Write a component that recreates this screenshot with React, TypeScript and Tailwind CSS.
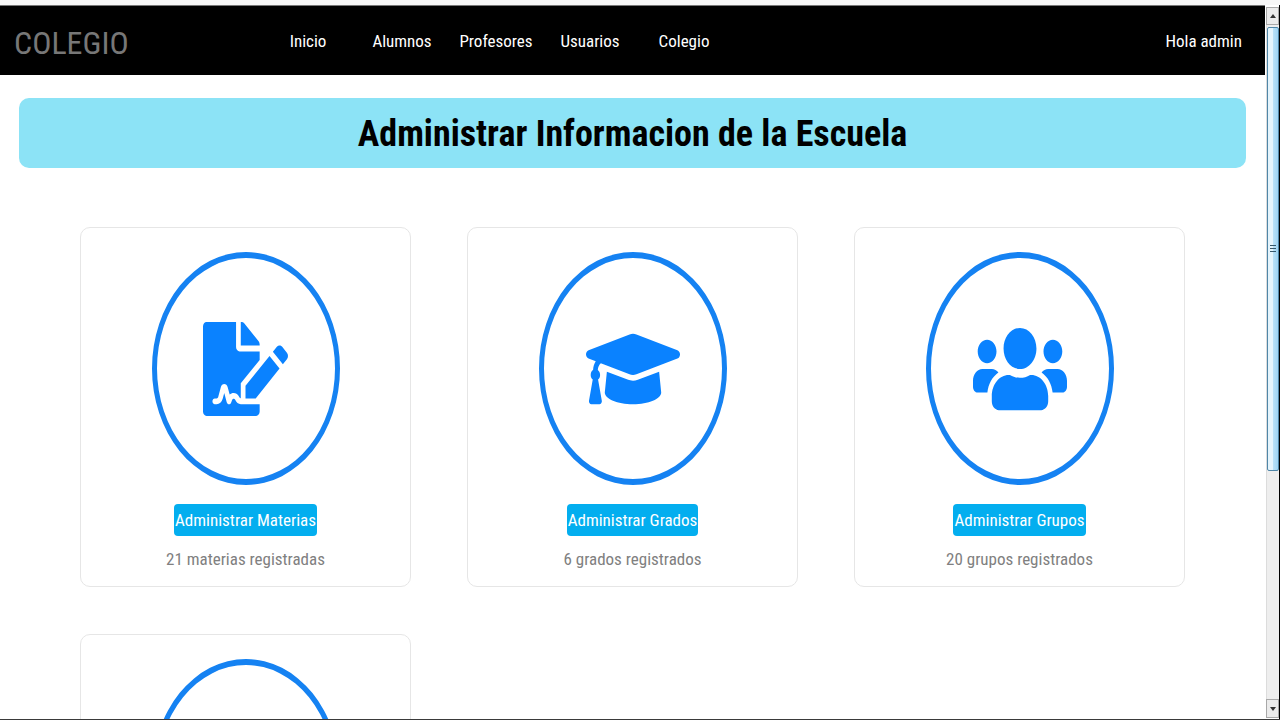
import type { ComponentType, SVGProps } from "react";
import { FaFileSignature, FaGraduationCap, FaUsers } from "react-icons/fa";

type IconType = ComponentType<SVGProps<SVGSVGElement>>;

interface Section {
  label: string;
  count: string;
  Icon: IconType;
  iconClass: string;
}

const navItems = ["Inicio", "Alumnos", "Profesores", "Usuarios", "Colegio"];

const sections: Section[] = [
  {
    label: "Administrar Materias",
    count: "21 materias registradas",
    Icon: FaFileSignature as IconType,
    iconClass: "h-[94px] w-[85px]",
  },
  {
    label: "Administrar Grados",
    count: "6 grados registrados",
    Icon: FaGraduationCap as IconType,
    iconClass: "h-[94px] w-[94px]",
  },
  {
    label: "Administrar Grupos",
    count: "20 grupos registrados",
    Icon: FaUsers as IconType,
    iconClass: "h-[94px] w-[94px]",
  },
];

function Navbar() {
  return (
    <header className="flex h-[69px] shrink-0 items-center bg-black pr-[23px] pl-[14px] text-white">
      <a href="#" className="w-[247px] pt-1 text-[32px] leading-10 text-[#777777]">
        COLEGIO
      </a>
      <nav className="grid grid-cols-[repeat(5,94px)] text-center text-[17px] leading-6">
        {navItems.map((item) => (
          <a key={item} href="#">
            {item}
          </a>
        ))}
      </nav>
      <a href="#" className="ml-auto text-[17px] leading-6">
        Hola admin
      </a>
    </header>
  );
}

function Ring({ Icon, iconClass }: { Icon?: IconType; iconClass?: string }) {
  return (
    <div className="flex h-[233px] w-[188px] items-center justify-center rounded-[50%] border-x-[5px] border-y-[6px] border-[#1582f2] text-[#0a82ff]">
      {Icon && <Icon className={iconClass} preserveAspectRatio="none" aria-hidden="true" />}
    </div>
  );
}

function SectionCard({ label, count, Icon, iconClass }: Section) {
  return (
    <article className="flex h-[360px] flex-col items-center rounded-[10px] border border-[#e6e6e6] pt-[24px]">
      <Ring Icon={Icon} iconClass={iconClass} />
      <button
        type="button"
        className="mt-[19px] h-[32px] rounded-[4px] bg-[#03aeef] px-px text-[17px] leading-6 text-white"
      >
        {label}
      </button>
      <p className="mt-[11px] text-[17px] leading-6 text-[#808080]">{count}</p>
    </article>
  );
}

function Scrollbar() {
  return (
    <div className="flex w-[15px] shrink-0 flex-col border-r border-black bg-white pt-[2px] pl-px">
      <button
        type="button"
        aria-label="Subir"
        className="flex h-[18px] items-center justify-center border border-[#a8a8a8] bg-[#ebebeb]"
      >
        <svg viewBox="0 0 6 4" className="h-1 w-[6px] fill-[#333333]" aria-hidden="true">
          <path d="M3 0 6 4H0z" />
        </svg>
      </button>
      <div className="flex min-h-0 flex-1 flex-col border-l border-[#dcdcdc] bg-[#eeeeee] pt-[2px]">
        <div className="flex h-[66%] flex-col items-center justify-center gap-[2px] rounded-[2px] border border-[#4f86a8] bg-linear-to-r from-[#e4f4fc] from-45% via-[#b9e1f8] via-50% to-[#9dd3f2]">
          <span className="h-px w-[6px] bg-[#35586c]" />
          <span className="h-px w-[6px] bg-[#35586c]" />
          <span className="h-px w-[6px] bg-[#35586c]" />
        </div>
      </div>
      <button
        type="button"
        aria-label="Bajar"
        className="mb-px flex h-[19px] items-center justify-center border border-[#a8a8a8] bg-[#ebebeb]"
      >
        <svg viewBox="0 0 6 4" className="h-1 w-[6px] fill-[#333333]" aria-hidden="true">
          <path d="M0 0H6L3 4z" />
        </svg>
      </button>
    </div>
  );
}

export default function App() {
  return (
    <div className="flex h-screen flex-col overflow-hidden border-b border-[#3a3a3a] bg-[#f7f7f7] pt-[5px] font-['Liberation_Sans_Narrow','Arial_Narrow','Roboto_Condensed','Liberation_Sans',sans-serif]">
      <div className="flex min-h-0 flex-1">
        <div className="flex min-w-0 flex-1 flex-col overflow-hidden border-t border-[#777777] bg-white">
          <Navbar />
          <main className="min-h-0 flex-1">
            <h1 className="mx-[19px] mt-[23px] flex h-[70px] items-center justify-center rounded-[10px] bg-[#8ce3f6] pt-[2px] text-[36px] font-bold text-black">
              Administrar Informacion de la Escuela
            </h1>
            <div className="mt-[59px] grid grid-cols-3 gap-x-[56px] gap-y-[47px] px-[80px]">
              {sections.map((section) => (
                <SectionCard key={section.label} {...section} />
              ))}
              <article className="flex h-[360px] flex-col items-center rounded-[10px] border border-[#e6e6e6] pt-[24px]">
                <Ring />
              </article>
            </div>
          </main>
        </div>
        <Scrollbar />
      </div>
    </div>
  );
}
